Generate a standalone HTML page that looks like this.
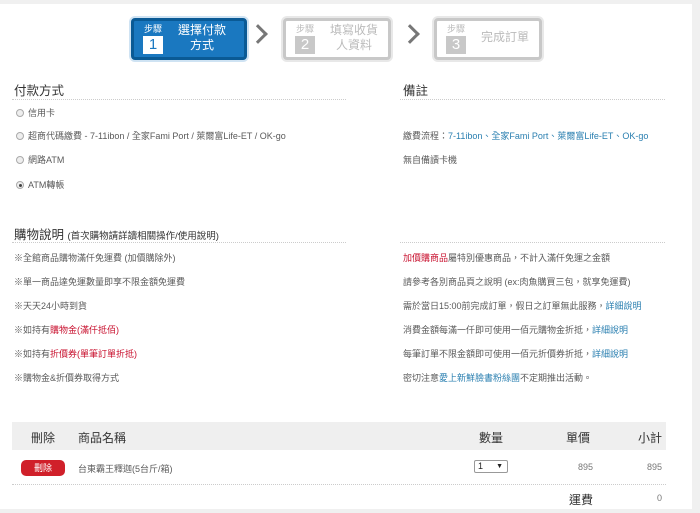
<!DOCTYPE html>
<html><head><meta charset="utf-8"><style>
*{margin:0;padding:0;box-sizing:border-box}
body{width:700px;height:513px;background:#f0f0f0;font-family:"Liberation Sans","Noto Sans CJK TC",sans-serif;position:relative;overflow:hidden;color:#555}
.panel{position:absolute;left:0;top:4px;width:692px;height:505px;background:#fff}
.a{position:absolute;white-space:nowrap}
.step{position:absolute;top:18px;height:42px;border-radius:4px}
.s1{left:131px;width:116px;background:#1a78c0;border:3px solid #0a5a95;box-shadow:0 0 0 2px #cfe3f3}
.s2,.s3{background:#fff;border:3px solid #c8c8c8;box-shadow:0 0 0 2px #e8e8e8}
.s2{left:283px;width:108px}.s3{left:434px;width:108px}
.badge{position:absolute;left:9px;top:2px;width:20px;height:32px;font-size:9px;line-height:12px;text-align:center}
.badge b{display:block;background:#fff;font-weight:normal;font-size:15px;line-height:18px;margin-top:1px}
.s1 .badge{color:#fff}.s1 .badge b{color:#1a78c0}
.s2 .badge,.s3 .badge{color:#bbb}.s2 .badge b,.s3 .badge b{background:#c8c8c8;color:#fff}
.st{position:absolute;left:36px;top:2px;width:64px;text-align:center;font-size:12px;line-height:15px}
.arrow{position:absolute;top:27px;width:14px;height:14px;border-right:3px solid #777;border-top:3px solid #777;transform:rotate(45deg)}
.h{font-size:12.5px;color:#333}
.dot{position:absolute;height:0;border-top:1px dotted #ccc}
.t{font-size:9px;color:#5a5a5a}
.r{color:#c8102e}.bl{color:#2a7fb0}
.radio{display:inline-block;width:8px;height:8px;border-radius:50%;border:1px solid #aaa;background:#eee;vertical-align:-1px;margin-right:4px;position:relative}
.radio.on:after{content:"";position:absolute;left:1.5px;top:1.5px;width:3px;height:3px;border-radius:50%;background:#444}
.thead{position:absolute;left:12px;top:422px;width:654px;height:28px;background:#efefef}
.th{font-size:12px;color:#333;top:429px}
</style></head><body>
<div class="panel"></div>
<div class="step s1"><div class="badge">步驟<b>1</b></div><div class="st" style="color:#fff">選擇付款<br>方式</div></div>
<div class="arrow" style="left:251px"></div>
<div class="step s2"><div class="badge">步驟<b>2</b></div><div class="st" style="color:#bbb">填寫收貨<br>人資料</div></div>
<div class="arrow" style="left:403px"></div>
<div class="step s3"><div class="badge">步驟<b>3</b></div><div class="st" style="color:#bbb;top:9px">完成訂單</div></div>

<div class="a h" style="left:14px;top:80px">付款方式</div>
<div class="dot" style="left:12px;top:99px;width:334px"></div>
<div class="a h" style="left:403px;top:80px">備註</div>
<div class="dot" style="left:400px;top:99px;width:265px"></div>
<div class="a t" style="left:16px;top:106px"><span class="radio"></span>信用卡</div>
<div class="a t" style="left:16px;top:129px"><span class="radio"></span>超商代碼繳費 - 7-11ibon / 全家Fami Port / 萊爾富Life-ET / OK-go</div>
<div class="a t" style="left:16px;top:153px"><span class="radio"></span>網路ATM</div>
<div class="a t" style="left:16px;top:178px"><span class="radio on"></span>ATM轉帳</div>
<div class="a t" style="left:403px;top:129px">繳費流程：<span class="bl">7-11ibon、全家Fami Port、萊爾富Life-ET、OK-go</span></div>
<div class="a t" style="left:403px;top:153px">無自備讀卡機</div>

<div class="a h" style="left:14px;top:224px">購物說明 <span style="font-size:9.5px">(首次購物請詳讀相關操作/使用說明)</span></div>
<div class="dot" style="left:12px;top:242px;width:334px"></div>
<div class="dot" style="left:400px;top:242px;width:265px"></div>
<div class="a t" style="left:14px;top:251px">※全館商品購物滿仟免運費 (加價購除外)</div>
<div class="a t" style="left:14px;top:275px">※單一商品達免運數量即享不限金額免運費</div>
<div class="a t" style="left:14px;top:299px">※天天24小時到貨</div>
<div class="a t" style="left:14px;top:323px">※如持有<span class="r">購物金(滿仟抵佰)</span></div>
<div class="a t" style="left:14px;top:347px">※如持有<span class="r">折價券(單筆訂單折抵)</span></div>
<div class="a t" style="left:14px;top:371px">※購物金&amp;折價券取得方式</div>
<div class="a t" style="left:403px;top:251px"><span class="r">加價購商品</span>屬特別優惠商品，不計入滿仟免運之金額</div>
<div class="a t" style="left:403px;top:275px">請參考各別商品頁之說明 (ex:肉魚購買三包，就享免運費)</div>
<div class="a t" style="left:403px;top:299px">需於當日15:00前完成訂單，假日之訂單無此服務，<span class="bl">詳細說明</span></div>
<div class="a t" style="left:403px;top:323px">消費金額每滿一仟即可使用一佰元購物金折抵，<span class="bl">詳細說明</span></div>
<div class="a t" style="left:403px;top:347px">每筆訂單不限金額即可使用一佰元折價券折抵，<span class="bl">詳細說明</span></div>
<div class="a t" style="left:403px;top:371px">密切注意<span class="bl">愛上新鮮臉書粉絲團</span>不定期推出活動。</div>

<div class="thead"></div>
<div class="a th" style="left:31px">刪除</div>
<div class="a th" style="left:78px">商品名稱</div>
<div class="a th" style="left:479px">數量</div>
<div class="a th" style="left:566px">單價</div>
<div class="a th" style="left:638px">小計</div>
<div class="a" style="left:21px;top:460px;width:44px;height:16px;background:#d0202a;border-radius:5px;color:#fff;font-size:9px;text-align:center;line-height:16px">刪除</div>
<div class="a t" style="left:78px;top:462px">台東霸王釋迦(5台斤/箱)</div>
<div class="a" style="left:474px;top:460px;width:34px;height:13px;border:1px solid #999;border-radius:2px;font-size:9px;color:#222;line-height:11px;padding-left:3px">1<span style="position:absolute;right:4px;font-size:7px">▼</span></div>
<div class="a t" style="left:578px;top:462px;color:#777">895</div>
<div class="a t" style="left:647px;top:462px;color:#777">895</div>
<div class="dot" style="left:12px;top:484px;width:654px"></div>
<div class="a th" style="left:569px;top:491px">運費</div>
<div class="a t" style="left:657px;top:493px;color:#777">0</div>
</body></html>
